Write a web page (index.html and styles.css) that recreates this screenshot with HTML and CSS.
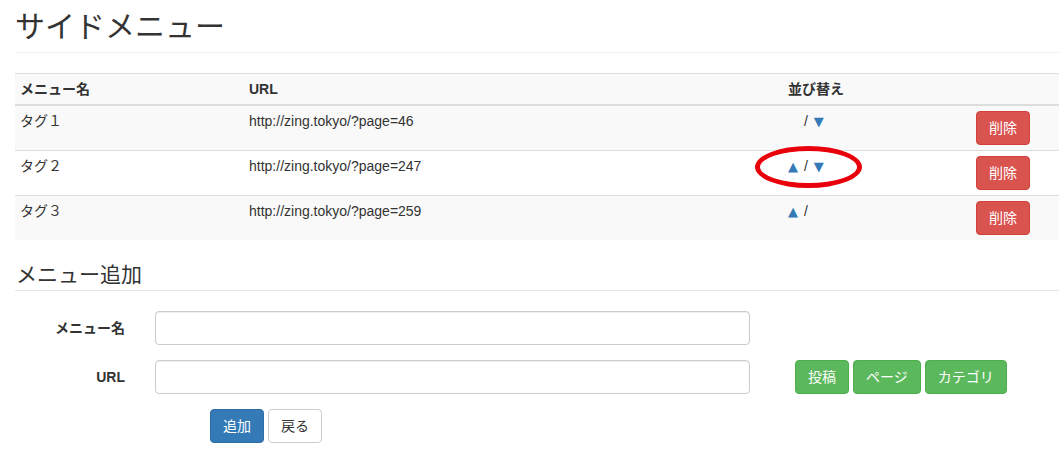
FILE: index.html
```html
<!DOCTYPE html>
<html lang="ja">
<head>
<meta charset="utf-8">
<title>サイドメニュー</title>
<link rel="stylesheet" href="styles.css">
</head>
<body>
<div class="container">
  <h1 class="page-header">サイドメニュー</h1>
  <table class="table">
    <colgroup>
      <col class="c-name"><col class="c-url"><col class="c-sort"><col class="c-del">
    </colgroup>
    <thead>
      <tr><th>メニュー名</th><th>URL</th><th>並び替え</th><th></th></tr>
    </thead>
    <tbody>
      <tr class="odd">
        <td>タグ１</td>
        <td>http://zing.tokyo/?page=46</td>
        <td class="sort"><span class="arrow hidden">▲</span> <span class="sep">/</span> <a class="arrow">▼</a></td>
        <td><button class="btn btn-danger">削除</button></td>
      </tr>
      <tr>
        <td>タグ２</td>
        <td>http://zing.tokyo/?page=247</td>
        <td class="sort sort-cell"><a class="arrow">▲</a> <span class="sep">/</span> <a class="arrow">▼</a><span class="circle"></span></td>
        <td><button class="btn btn-danger">削除</button></td>
      </tr>
      <tr class="odd">
        <td>タグ３</td>
        <td>http://zing.tokyo/?page=259</td>
        <td class="sort"><a class="arrow">▲</a> <span class="sep">/</span></td>
        <td><button class="btn btn-danger">削除</button></td>
      </tr>
    </tbody>
  </table>
  <form class="form">
    <div class="legend">メニュー追加</div>
    <div class="form-group">
      <label class="label">メニュー名</label>
      <input class="input" type="text">
    </div>
    <div class="form-group">
      <label class="label">URL</label>
      <input class="input" type="text">
      <div class="pick">
        <button type="button" class="btn btn-success">投稿</button>
        <button type="button" class="btn btn-success">ページ</button>
        <button type="button" class="btn btn-success">カテゴリ</button>
      </div>
    </div>
    <div class="actions">
      <button type="button" class="btn btn-primary">追加</button>
      <button type="button" class="btn btn-default">戻る</button>
    </div>
  </form>
</div>
</body>
</html>
```
FILE: styles.css
```css
html, body {
  margin: 0;
  padding: 0;
  background: #fff;
}
body {
  font-family: "Liberation Sans", "Noto Sans CJK JP", sans-serif;
  font-size: 14px;
  line-height: 20px;
  color: #333;
  overflow: hidden;
}
.container {
  padding-left: 15px;
}
.page-header {
  margin: 10px 0 20px;
  padding-bottom: 9px;
  border-bottom: 1px solid #eee;
  font-size: 30px;
  line-height: 33px;
  font-weight: 400;
}
.table {
  width: 100%;
  border-collapse: collapse;
  table-layout: fixed;
  margin-bottom: 20px;
}
.c-name { width: 229px; }
.c-url { width: 539px; }
.c-sort { width: 188px; }
.table th, .table td {
  padding: 5px;
  text-align: left;
  vertical-align: top;
  line-height: 20px;
}
.table thead tr {
  background: #f9f9f9;
}
.table th {
  border-top: 1px solid #ddd;
  border-bottom: 2px solid #ddd;
  font-weight: bold;
}
.table td {
  border-top: 1px solid #ddd;
}
.table tbody tr:first-child td {
  border-top: 0;
}
.table tr.odd {
  background: #f9f9f9;
}
.sort {
  padding-left: 7px;
}
.arrow {
  color: #337ab7;
  font-family: "DejaVu Sans", sans-serif;
  font-size: 13px;
}
.sep {
  display: inline-block;
  margin: 0 2px 0 2px;
}
.hidden {
  visibility: hidden;
}
.sort-cell {
  position: relative;
}
.circle {
  position: absolute;
  left: -28px;
  top: -5px;
  width: 97px;
  height: 32px;
  border: 5px solid #e8000b;
  border-radius: 50%;
}
.btn {
  display: inline-block;
  box-sizing: border-box;
  height: 34px;
  padding: 6px 12px;
  font-family: inherit;
  font-size: 14px;
  line-height: 20px;
  border: 1px solid transparent;
  border-radius: 4px;
  cursor: pointer;
  margin: 0;
}
.btn-danger {
  background: #d9534f;
  border-color: #d43f3a;
  color: #fff;
}
.btn-success {
  background: #5cb85c;
  border-color: #4cae4c;
  color: #fff;
}
.btn-primary {
  background: #337ab7;
  border-color: #2e6da4;
  color: #fff;
}
.btn-default {
  background: #fff;
  border-color: #ccc;
  color: #333;
}
.form {
  margin: 0;
}
.legend {
  font-size: 21px;
  line-height: 30px;
  border-bottom: 1px solid #e5e5e5;
  margin-bottom: 20px;
  padding-left: 1px;
}
.form-group {
  display: flex;
  align-items: flex-start;
  margin-bottom: 15px;
}
.label {
  width: 110px;
  padding-right: 15px;
  padding-top: 7px;
  text-align: right;
  font-weight: bold;
  line-height: 20px;
}
.input {
  box-sizing: border-box;
  margin: 0 0 0 15px;
  width: 595px;
  height: 34px;
  padding: 6px 12px;
  border: 1px solid #ccc;
  border-radius: 4px;
  font-family: inherit;
  font-size: 14px;
  box-shadow: inset 0 1px 1px rgba(0,0,0,.075);
}
.pick {
  display: flex;
  gap: 4px;
  margin-left: 45px;
}
.actions {
  display: flex;
  gap: 4px;
  padding-left: 195px;
}
```
